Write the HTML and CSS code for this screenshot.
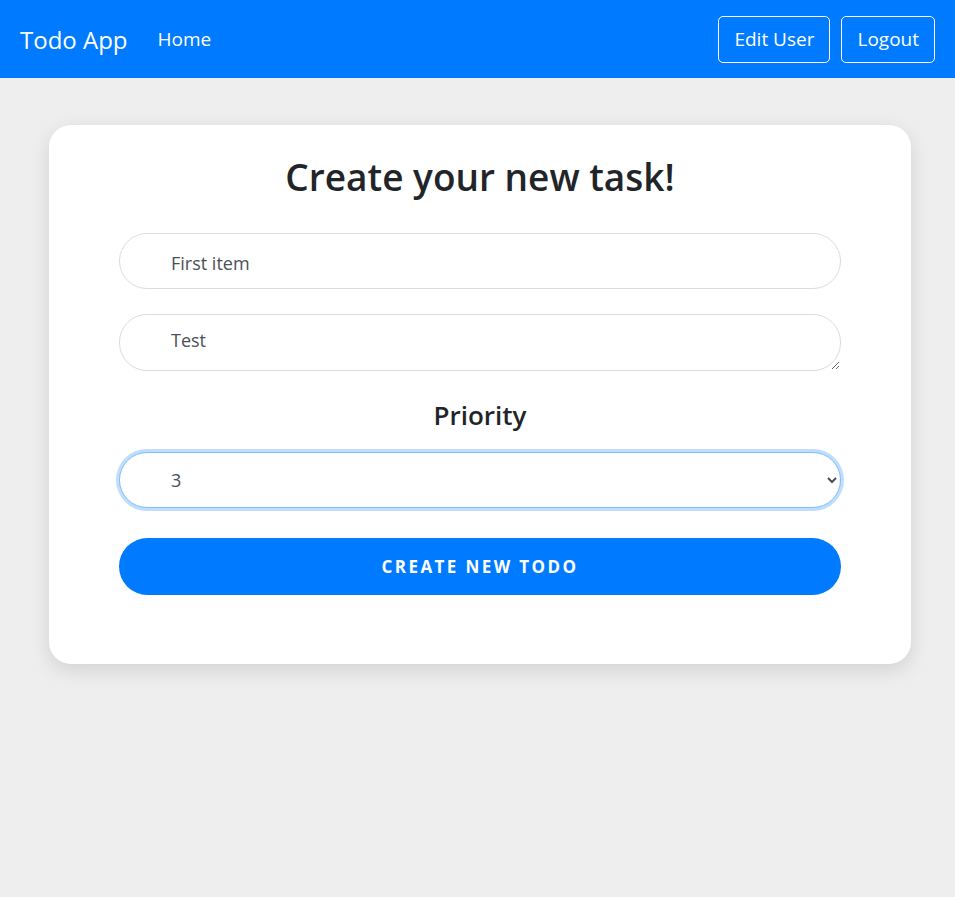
FILE: index.html
```html
<!DOCTYPE html>
<html lang="en">
<head>
<meta charset="utf-8">
<title>Todo App</title>
<link rel="stylesheet" href="styles.css">
</head>
<body>
<nav class="navbar">
  <div class="nav-left">
    <span class="brand">Todo App</span>
    <a class="nav-link" href="#">Home</a>
  </div>
  <div class="nav-right">
    <button class="btn-outline">Edit User</button>
    <button class="btn-outline">Logout</button>
  </div>
</nav>
<main class="page">
  <section class="card">
    <h1 class="title">Create your new task!</h1>
    <form class="form">
      <input class="field text" type="text" value="First item">
      <textarea class="field area">Test</textarea>
      <h3 class="subtitle">Priority</h3>
      <select class="field select focused">
        <option>1</option>
        <option>2</option>
        <option selected>3</option>
        <option>4</option>
        <option>5</option>
      </select>
      <button type="button" class="submit">Create new todo</button>
    </form>
  </section>
</main>
</body>
</html>
```
FILE: styles.css
```css
* { box-sizing: border-box; }
html, body { margin: 0; padding: 0; }
body {
  background: #eeeeee;
  font-family: "Open Sans", "Noto Sans", sans-serif;
  color: #212529;
  min-height: 897px;
}
.navbar {
  background: #007bff;
  height: 78px;
  display: flex;
  align-items: center;
  justify-content: space-between;
  padding: 0 20px;
}
.nav-left { display: flex; align-items: center; gap: 30px; }
.brand { color: #fff; font-size: 24px; }
.nav-link { color: #fff; text-decoration: none; font-size: 19px; }
.nav-right { display: flex; gap: 11px; }
.btn-outline {
  background: transparent;
  color: #fff;
  border: 1px solid #fff;
  border-radius: 5px;
  font-family: inherit;
  font-size: 19px;
  height: 47px;
  padding: 1px 15px 0;
  line-height: 1;
}
.page { padding: 47px 44px 0 49px; }
.card {
  background: #fff;
  border-radius: 22px;
  box-shadow: 0 6px 20px rgba(0,0,0,0.12);
  padding: 28px 70px 69px;
  width: 862px;
}
.title {
  margin: 0 0 32px;
  text-align: center;
  font-size: 37px;
  font-weight: 600;
  line-height: 1.3;
}
.form { display: flex; flex-direction: column; }
.field {
  width: 100%;
  height: 56px;
  border: 1px solid #dcdcdc;
  border-radius: 28px;
  padding: 0 51px;
  font-family: inherit;
  font-size: 18px;
  color: #495057;
  background: #fff;
}
.text { padding-top: 4px; }
.area {
  margin-top: 25px;
  height: 57px;
  padding-top: 12px;
  line-height: 1.5;
  resize: vertical;
}
.subtitle {
  margin: 28px 0 19px;
  text-align: center;
  font-size: 26px;
  font-weight: 600;
  line-height: 1.3;
}
.select { padding-left: 47px; padding-right: 12px; }
.focused {
  border-color: #80bdff;
  box-shadow: 0 0 0 3px rgba(0,123,255,0.25);
  outline: none;
}
.submit {
  margin-top: 30px;
  height: 57px;
  border: none;
  border-radius: 29px;
  background: #007bff;
  color: #fff;
  font-family: inherit;
  font-size: 17px;
  font-weight: 700;
  letter-spacing: 2.4px;
  text-transform: uppercase;
  padding-top: 2px;
}
```
